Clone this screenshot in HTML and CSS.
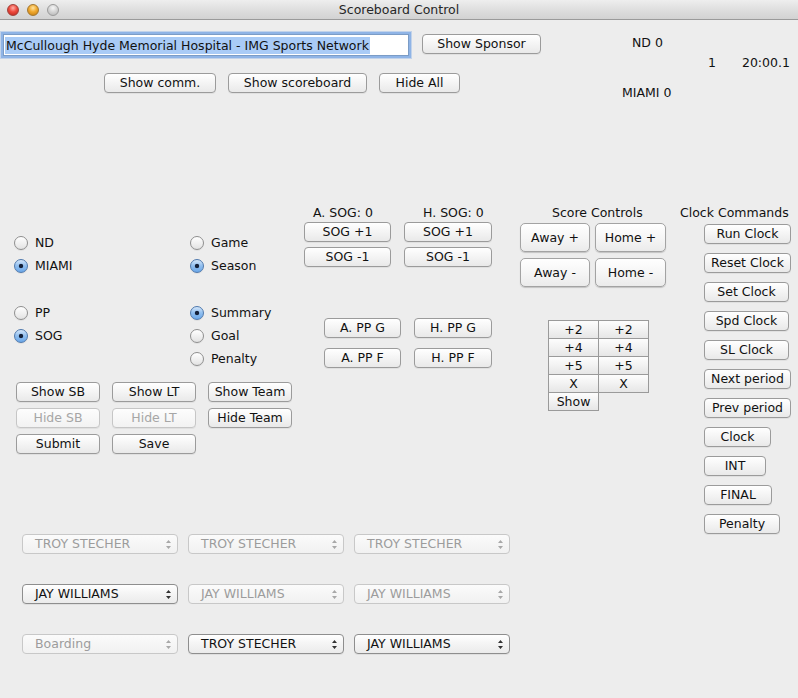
FILE: index.html
```html
<!DOCTYPE html>
<html>
<head>
<meta charset="utf-8">
<title>Scoreboard Control</title>
<link rel="stylesheet" href="styles.css">
</head>
<body>
<div class="window">
  <div class="titlebar">
    <div class="lights"><span class="light red"></span><span class="light yellow"></span><span class="light grey"></span></div>
    <div class="title">Scoreboard Control</div>
    <div></div>
  </div>

  <section class="top">
    <div class="top-left">
      <div class="row1">
        <div class="field"><span class="sel">McCullough Hyde Memorial Hospital - IMG Sports Network</span></div>
        <button class="btn w-sponsor">Show Sponsor</button>
      </div>
      <div class="row2">
        <button class="btn w-comm">Show comm.</button>
        <button class="btn w-sb">Show scoreboard</button>
        <button class="btn w-hide">Hide All</button>
      </div>
    </div>
    <div class="score">
      <div class="s-away">ND 0</div>
      <div class="s-clock"><span class="period">1</span><span class="time">20:00.1</span></div>
      <div class="s-home">MIAMI 0</div>
    </div>
  </section>

  <section class="middle">
    <div class="col1">
      <div class="radios">
        <label class="ritem"><span class="radio"></span>ND</label>
        <label class="ritem"><span class="radio"></span>Game</label>
        <label class="ritem"><span class="radio on"></span>MIAMI</label>
        <label class="ritem"><span class="radio on"></span>Season</label>
        <span></span><span></span>
        <label class="ritem"><span class="radio"></span>PP</label>
        <label class="ritem"><span class="radio on"></span>Summary</label>
        <label class="ritem"><span class="radio on"></span>SOG</label>
        <label class="ritem"><span class="radio"></span>Goal</label>
        <span></span>
        <label class="ritem"><span class="radio"></span>Penalty</label>
      </div>
      <div class="lt-buttons">
        <button class="btn">Show SB</button>
        <button class="btn">Show LT</button>
        <button class="btn">Show Team</button>
        <button class="btn dis">Hide SB</button>
        <button class="btn dis">Hide LT</button>
        <button class="btn">Hide Team</button>
        <button class="btn">Submit</button>
        <button class="btn">Save</button>
      </div>
    </div>

    <div class="col2">
      <div class="sog">
        <div class="sog-label a">A. SOG: 0</div>
        <div class="sog-label h">H. SOG: 0</div>
        <button class="btn">SOG +1</button>
        <button class="btn">SOG +1</button>
        <button class="btn">SOG -1</button>
        <button class="btn">SOG -1</button>
      </div>
      <div class="pp">
        <button class="btn">A. PP G</button>
        <button class="btn">H. PP G</button>
        <button class="btn">A. PP F</button>
        <button class="btn">H. PP F</button>
      </div>
    </div>

    <div class="col3">
      <div class="head sc-head">Score Controls</div>
      <div class="score-btns">
        <button class="btn big">Away +</button>
        <button class="btn big">Home +</button>
        <button class="btn big">Away -</button>
        <button class="btn big">Home -</button>
      </div>
      <div class="pen-grid">
        <div class="cell">+2</div><div class="cell">+2</div>
        <div class="cell">+4</div><div class="cell">+4</div>
        <div class="cell">+5</div><div class="cell">+5</div>
        <div class="cell">X</div><div class="cell">X</div>
        <div class="cell">Show</div>
      </div>
    </div>

    <div class="col4">
      <div class="head">Clock Commands</div>
      <div class="clock-btns">
        <button class="btn cw87">Run Clock</button>
        <button class="btn cw87">Reset Clock</button>
        <button class="btn cw85">Set Clock</button>
        <button class="btn cw85">Spd Clock</button>
        <button class="btn cw85">SL Clock</button>
        <button class="btn cw87">Next period</button>
        <button class="btn cw87">Prev period</button>
        <button class="btn cw67">Clock</button>
        <button class="btn cw62">INT</button>
        <button class="btn cw68">FINAL</button>
        <button class="btn cw76">Penalty</button>
      </div>
    </div>
  </section>

  <section class="selects">
    <div class="combo dis"><span>TROY STECHER</span><svg class="arr" width="7" height="11" viewBox="0 0 7 11"><path d="M3.5 1 L6 4 H1 Z M1 7 H6 L3.5 10 Z"/></svg></div>
    <div class="combo dis"><span>TROY STECHER</span><svg class="arr" width="7" height="11" viewBox="0 0 7 11"><path d="M3.5 1 L6 4 H1 Z M1 7 H6 L3.5 10 Z"/></svg></div>
    <div class="combo dis"><span>TROY STECHER</span><svg class="arr" width="7" height="11" viewBox="0 0 7 11"><path d="M3.5 1 L6 4 H1 Z M1 7 H6 L3.5 10 Z"/></svg></div>
    <div class="combo"><span>JAY WILLIAMS</span><svg class="arr" width="7" height="11" viewBox="0 0 7 11"><path d="M3.5 1 L6 4 H1 Z M1 7 H6 L3.5 10 Z"/></svg></div>
    <div class="combo dis"><span>JAY WILLIAMS</span><svg class="arr" width="7" height="11" viewBox="0 0 7 11"><path d="M3.5 1 L6 4 H1 Z M1 7 H6 L3.5 10 Z"/></svg></div>
    <div class="combo dis"><span>JAY WILLIAMS</span><svg class="arr" width="7" height="11" viewBox="0 0 7 11"><path d="M3.5 1 L6 4 H1 Z M1 7 H6 L3.5 10 Z"/></svg></div>
    <div class="combo dis"><span>Boarding</span><svg class="arr" width="7" height="11" viewBox="0 0 7 11"><path d="M3.5 1 L6 4 H1 Z M1 7 H6 L3.5 10 Z"/></svg></div>
    <div class="combo"><span>TROY STECHER</span><svg class="arr" width="7" height="11" viewBox="0 0 7 11"><path d="M3.5 1 L6 4 H1 Z M1 7 H6 L3.5 10 Z"/></svg></div>
    <div class="combo"><span>JAY WILLIAMS</span><svg class="arr" width="7" height="11" viewBox="0 0 7 11"><path d="M3.5 1 L6 4 H1 Z M1 7 H6 L3.5 10 Z"/></svg></div>
  </section>
</div>
</body>
</html>
```

FILE: styles.css
```css
html, body {
  margin: 0;
  padding: 0;
  background: #ededed;
}
body {
  font-family: "DejaVu Sans", "Liberation Sans", sans-serif;
  font-size: 12.5px;
  color: #111;
}
.window {
  width: 798px;
  height: 698px;
  overflow: hidden;
  background: #ededed;
}

/* title bar */
.titlebar {
  height: 19px;
  border-bottom: 1px solid #9a9a9a;
  background: linear-gradient(#eeeeee, #dcdcdc 60%, #d2d2d2);
  display: grid;
  grid-template-columns: 1fr auto 1fr;
  align-items: center;
}
.lights {
  display: flex;
  gap: 8px;
  padding-left: 7px;
}
.light {
  width: 12px;
  height: 12px;
  border-radius: 50%;
  box-sizing: border-box;
}
.light.red {
  background: radial-gradient(circle at 50% 30%, #ffb0a8 0, #ee4a3e 45%, #b8231b 100%);
  border: 1px solid #a0403a;
}
.light.yellow {
  background: radial-gradient(circle at 50% 30%, #ffe3a0 0, #f0a92e 45%, #c17a12 100%);
  border: 1px solid #a3772f;
}
.light.grey {
  background: radial-gradient(circle at 50% 30%, #f6f6f6 0, #d2d2d2 50%, #b3b3b3 100%);
  border: 1px solid #9a9a9a;
}
.title {
  color: #262626;
  font-size: 12.5px;
  line-height: 18px;
}

/* top area */
.top {
  height: 185px;
  display: flex;
}
.top-left {
  width: 622px;
  padding-top: 14px;
}
.row1 {
  display: flex;
  align-items: flex-start;
  gap: 13px;
}
.field {
  margin-left: 3px;
  width: 406px;
  height: 22px;
  box-sizing: border-box;
  border: 1px solid #7b9cc6;
  background: #fff;
  box-shadow: 0 0 0 2px #8fb4e6, 0 0 0 3px rgba(143, 180, 230, 0.45);
  padding: 2px 0 0 1px;
  white-space: nowrap;
  overflow: hidden;
}
.sel {
  background: #a9cbf6;
  color: #111;
  line-height: 17px;
  display: inline-block;
  padding: 0 1px;
}
.w-sponsor { width: 119px; }
.row2 {
  display: flex;
  gap: 12px;
  margin-top: 17px;
  padding-left: 104px;
}
.w-comm { width: 112px; }
.w-sb { width: 139px; }
.w-hide { width: 81px; }

.score {
  padding-top: 15px;
  line-height: 16px;
}
.s-away { padding-left: 10px; }
.s-clock {
  margin-top: 4px;
  display: flex;
  padding-left: 86px;
}
.s-clock .time { margin-left: 26px; }
.s-home { margin-top: 14px; }

/* buttons */
.btn {
  appearance: none;
  -webkit-appearance: none;
  margin: 0;
  padding: 0;
  height: 20px;
  box-sizing: border-box;
  border: 1px solid #9b9b9b;
  border-radius: 4px;
  background: linear-gradient(#ffffff, #f4f4f4 50%, #e9e9e9);
  box-shadow: 0 1px 0 rgba(0, 0, 0, 0.05);
  font-family: inherit;
  font-size: 12.5px;
  line-height: 18px;
  color: #111;
  text-align: center;
  white-space: nowrap;
}
.btn.dis {
  color: #a6a6a6;
  border-color: #c6c6c6;
  background: linear-gradient(#fdfdfd, #f2f2f2);
}
.btn.big {
  height: 29px;
  border-radius: 5px;
  border-color: #a3a3a3;
  box-shadow: 0 1px 1px rgba(0, 0, 0, 0.18);
  background: linear-gradient(#ffffff, #f6f6f6 50%, #ebebeb);
}

/* middle */
.middle {
  display: flex;
  align-items: flex-start;
}
.col1 { width: 304px; padding-top: 26px; }
.col2 { width: 216px; }
.col3 { width: 160px; }
.col4 { flex: 1; }

.radios {
  display: grid;
  grid-template-columns: 176px 1fr;
  grid-template-rows: 23px 23px 24px 23px 23px 23px;
  padding-left: 14px;
}
.ritem {
  display: flex;
  align-items: center;
}
.radio {
  width: 14px;
  height: 14px;
  margin-right: 7px;
  border-radius: 50%;
  box-sizing: border-box;
  border: 1px solid #8f8f8f;
  background: linear-gradient(#ffffff, #eeeeee 60%, #e2e2e2);
  box-shadow: 0 1px 0 rgba(0, 0, 0, 0.06);
}
.radio.on {
  border-color: #4f79ad;
  background:
    radial-gradient(circle at 50% 50%, #14213a 0, #14213a 1.8px, rgba(20, 33, 58, 0) 2.6px),
    linear-gradient(#d4e6fa, #8fbeef 50%, #6ca8e9);
}

.lt-buttons {
  margin-top: 12px;
  padding-left: 16px;
  display: grid;
  grid-template-columns: 84px 84px 84px;
  column-gap: 12px;
  row-gap: 6px;
}

.sog {
  display: grid;
  grid-template-columns: 87px 88px;
  grid-template-rows: 16px 20px 20px;
  column-gap: 13px;
  row-gap: 0;
}
.sog .btn:nth-of-type(1), .sog .btn:nth-of-type(2) { margin-top: 1px; }
.sog .btn:nth-of-type(3), .sog .btn:nth-of-type(4) { margin-top: 6px; }
.sog-label { line-height: 16px; }
.sog-label.a { padding-left: 9px; }
.sog-label.h { padding-left: 19px; }
.pp {
  margin-top: 57px;
  padding-left: 20px;
  display: grid;
  grid-template-columns: 77px 78px;
  column-gap: 13px;
  row-gap: 10px;
}

.head { line-height: 16px; }
.sc-head { padding-left: 32px; }
.score-btns {
  margin-top: 2px;
  display: grid;
  grid-template-columns: 70px 71px;
  column-gap: 5px;
  row-gap: 6px;
}
.pen-grid {
  margin-top: 34px;
  margin-left: 29px;
  display: grid;
  grid-template-columns: 49px 49px;
  grid-auto-rows: 17px;
  gap: 1px;
}
.cell {
  box-shadow: 0 0 0 1px #9a9a9a;
  background: linear-gradient(#fdfdfd, #f2f2f2 50%, #e6e6e6);
  text-align: center;
  line-height: 17px;
  font-size: 12.5px;
}

.clock-btns {
  margin-top: 3px;
  padding-left: 24px;
  display: flex;
  flex-direction: column;
  align-items: flex-start;
  gap: 9px;
}
.cw87 { width: 87px; }
.cw85 { width: 85px; }
.cw67 { width: 67px; }
.cw62 { width: 62px; }
.cw68 { width: 68px; }
.cw76 { width: 76px; }

/* selects */
.selects {
  padding-left: 22px;
  display: grid;
  grid-template-columns: 156px 156px 156px;
  column-gap: 10px;
  row-gap: 30px;
}
.combo {
  height: 20px;
  box-sizing: border-box;
  border: 1px solid #8e8e8e;
  border-radius: 4px;
  background: linear-gradient(#ffffff, #f4f4f4 50%, #ebebeb);
  box-shadow: 0 1px 0 rgba(0, 0, 0, 0.06);
  display: flex;
  align-items: center;
  justify-content: space-between;
  padding: 0 5px 0 12px;
  line-height: 18px;
  color: #111;
}
.combo .arr { fill: #333; }
.combo.dis {
  border-color: #c8c8c8;
  color: #9c9c9c;
  background: linear-gradient(#fbfbfb, #f1f1f1);
  box-shadow: none;
}
.combo.dis .arr { fill: #a8a8a8; }
```
